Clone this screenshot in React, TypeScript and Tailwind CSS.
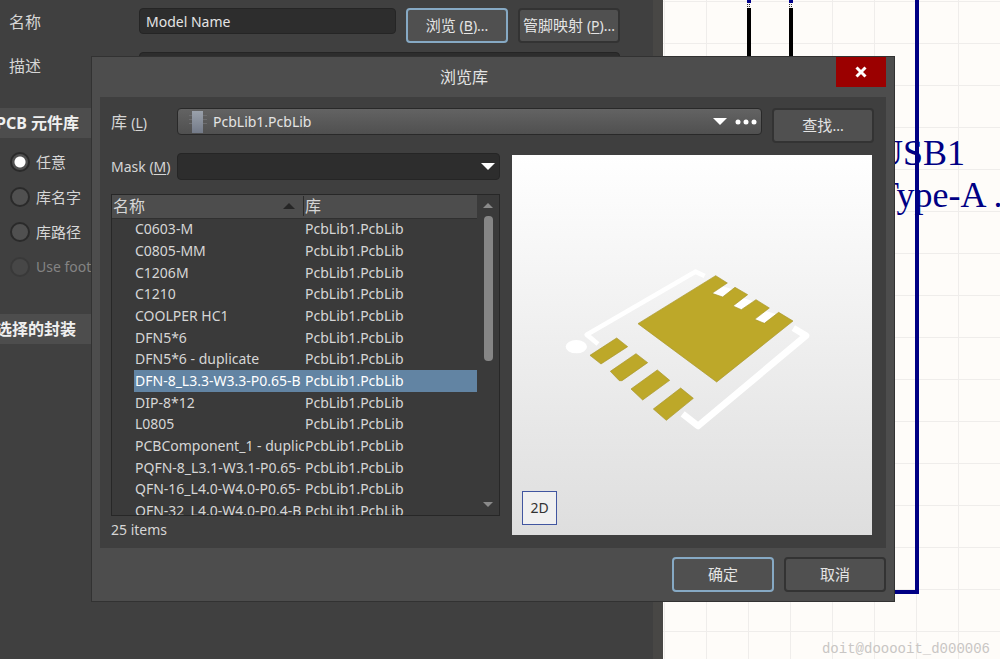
import { useState } from "react";
import type { ReactNode } from "react";
import clsx from "clsx";

const LIB = "PcbLib1.PcbLib";

const footprints = [
  "C0603-M",
  "C0805-MM",
  "C1206M",
  "C1210",
  "COOLPER HC1",
  "DFN5*6",
  "DFN5*6 - duplicate",
  "DFN-8_L3.3-W3.3-P0.65-B",
  "DIP-8*12",
  "L0805",
  "PCBComponent_1 - duplic",
  "PQFN-8_L3.1-W3.1-P0.65-",
  "QFN-16_L4.0-W4.0-P0.65-",
  "QFN-32_L4.0-W4.0-P0.4-B",
];

const scopes = [
  { id: "any", label: "任意", disabled: false },
  { id: "name", label: "库名字", disabled: false },
  { id: "path", label: "库路径", disabled: false },
  { id: "integrated", label: "Use footprint", disabled: true },
];

function Key({ children }: { children: string }) {
  return (
    <span className="text-sm">
      (<span className="underline underline-offset-2">{children}</span>)
    </span>
  );
}

interface PushButtonProps {
  children: ReactNode;
  primary?: boolean;
}

function PushButton({ children, primary = false }: PushButtonProps) {
  return (
    <button
      className={clsx(
        "flex h-[35px] w-[102px] shrink-0 items-center justify-center rounded border-2 bg-[#505050] text-[15px] whitespace-nowrap text-[#e4e4e4]",
        primary ? "border-[#86a9c4]" : "border-[#333]"
      )}
    >
      {children}
    </button>
  );
}

function Arrow({ className, up = false }: { className: string; up?: boolean }) {
  return (
    <svg viewBox="0 0 12 6" className={clsx("shrink-0", className)} aria-hidden="true">
      <path d={up ? "M0 6L6 0L12 6Z" : "M0 0L6 6L12 0Z"} fill="currentColor" />
    </svg>
  );
}

function SectionTitle({ children }: { children: ReactNode }) {
  return (
    <h2 className="flex h-[30px] items-center bg-[#4d4d4d] text-base font-bold text-[#f0f0f0]">
      <span className="-ml-1">{children}</span>
    </h2>
  );
}

function ModelPanel() {
  const [scope, setScope] = useState("any");

  return (
    <section className="w-[663px] shrink-0 overflow-hidden border-r-[10px] border-[#484745] bg-[#404040]">
      <div className="flex items-start pt-2 pl-[9px]">
        <label htmlFor="model-name" className="w-[130px] pt-0.5 text-base">
          名称
        </label>
        <input
          id="model-name"
          defaultValue="Model Name"
          className="h-[26px] w-[257px] rounded border border-[#252525] bg-[#2d2d2d] px-1.5 text-sm text-[#e4e4e4]"
        />
        <div className="ml-2.5 flex gap-2.5">
          <PushButton primary>
            <span>
              浏览 <Key>B</Key>
              <span className="text-sm">...</span>
            </span>
          </PushButton>
          <PushButton>
            <span>
              管脚映射 <Key>P</Key>
              <span className="text-sm">...</span>
            </span>
          </PushButton>
        </div>
      </div>
      <div className="flex items-start pt-[9px] pl-[9px]">
        <label htmlFor="model-desc" className="w-[130px] pt-0.5 text-base">
          描述
        </label>
        <input
          id="model-desc"
          className="h-[26px] w-[481px] rounded border border-[#252525] bg-[#2d2d2d] px-1.5 text-sm"
        />
      </div>

      <div className="mt-[30px]">
        <SectionTitle>PCB 元件库</SectionTitle>
        <fieldset className="flex flex-col gap-[11px] pt-3 pb-[35px] pl-2.5">
          {scopes.map((s) => (
            <label
              key={s.id}
              className={clsx("flex h-6 items-center gap-1.5", s.disabled && "text-[#848484]")}
            >
              <input
                type="radio"
                name="scope"
                checked={scope === s.id}
                disabled={s.disabled}
                onChange={() => setScope(s.id)}
                className="size-5 appearance-none rounded-full border-2 border-[#2a2a2a] bg-[#505050] checked:bg-[radial-gradient(circle,#fff_5px,#505050_6px)] disabled:border-[#393939] disabled:bg-[#474747]"
              />
              <span className={s.disabled ? "text-sm" : "text-[15px]"}>{s.label}</span>
            </label>
          ))}
        </fieldset>
        <SectionTitle>选择的封装</SectionTitle>
      </div>
    </section>
  );
}

// Schematic sheet behind the dialogs
function Sheet() {
  return (
    <div className="relative min-w-0 flex-1 overflow-hidden bg-[#fefcf9]">
      <svg className="absolute inset-0 h-full w-full" aria-hidden="true">
        <defs>
          <pattern id="grid" x="1" y="1" width="42" height="42" patternUnits="userSpaceOnUse">
            <path d="M0.5 0V42M0 0.5H42" stroke="#efedeb" fill="none" />
          </pattern>
        </defs>
        <rect width="100%" height="100%" fill="url(#grid)" />
        <path d="M86 8V120M128 8V120" stroke="#000" strokeWidth="4" />
        <path d="M86 0V3M128 0V3" stroke="#00008b" strokeWidth="4" />
        <path
          d="M84 4.5H88M84 6.5H88M126 4.5H130M126 6.5H130"
          stroke="#333"
          strokeDasharray="1 1"
        />
        <path d="M254 0V592H120" stroke="#000084" strokeWidth="4" fill="none" />
        <g fill="#000084" fontSize="36" fontFamily="'Liberation Serif', serif">
          <text x="214" y="165">USB1</text>
          <text x="214" y="207">Type-A .</text>
        </g>
      </svg>
      <p className="absolute right-2.5 bottom-0 font-['Liberation_Mono',monospace] text-sm text-[#c9c6c4]">
        doit@dooooit_d000006
      </p>
    </div>
  );
}

function FootprintPreview() {
  return (
    <div className="relative mt-0.5 mr-0.5 h-[380px] min-w-0 flex-1 bg-linear-to-b from-white to-[#dedede]">
      <svg viewBox="0 0 360 380" className="h-full w-full" role="img" aria-label="DFN-8">
        <g transform="translate(-2 85) scale(.33333)">
          <g fill="none" stroke="#fff" strokeWidth="20" strokeLinejoin="round">
            <path d="M584 108L556 95L230 284L264 312" strokeWidth="14" />
            <path d="M850 264L888 287L564 558L518 522" />
          </g>
          <ellipse cx="199" cy="320" rx="32" ry="20" fill="#fff" />
          <path
            d="M606 160L634 138L668 148L642 168Q630 174 620 170ZM668 198L700 174L730 184L708 204Q696 212 684 207ZM732 238L764 212L798 222L770 246Q758 254 748 250Z"
            fill="#fff"
          />
          <g fill="#bda829" stroke="#a8962a" strokeWidth="2" strokeLinejoin="round">
            <path d="M617 107L652 129L606 160L638 171L675 142L713 164L669 198L694 209L738 179L778 204L734 238L763 250L806 217L849 243L620 426L384 251Z" />
            <path d="M320 294L353 320L273 372L240 346Z" />
            <path d="M378 341L413 368L336 422L328 422L301 394Z" />
            <path d="M442 390L479 421L398 480L363 447Z" />
            <path d="M512 444L550 475L469 541L430 507Z" />
          </g>
        </g>
      </svg>
      <button className="absolute bottom-2.5 left-2.5 h-[34px] w-[35px] border border-[#4156a0] bg-[#f0f0f0] text-sm text-[#333]">
        2D
      </button>
    </div>
  );
}

function FootprintList() {
  const [selected, setSelected] = useState(7);

  return (
    <div className="flex h-[322px] overflow-hidden border border-[#272727] bg-[#3a3a3a]">
      <div className="min-w-0 flex-1 overflow-hidden">
        <table className="h-[327px] w-full table-fixed border-collapse text-left">
          <colgroup>
            <col className="w-[22px]" />
            <col className="w-[170px]" />
            <col />
          </colgroup>
          <thead>
            <tr className="h-[23px] border-b border-[#303030] bg-[#4d4d4d] text-base leading-5">
              <th colSpan={2} className="p-0 font-normal">
                <div className="flex items-center justify-between border-r border-[#2b2b2b] pr-2 pl-px">
                  名称
                  <Arrow up className="h-[6px] w-3 text-[#262626]" />
                </div>
              </th>
              <th className="p-0 pl-px font-normal">库</th>
            </tr>
          </thead>
          <tbody>
            {footprints.map((name, i) => (
              <tr key={name} onClick={() => setSelected(i)} className="text-sm leading-5">
                <td className="p-0" />
                <td
                  className={clsx(
                    "overflow-hidden p-0 pl-px whitespace-nowrap",
                    i === selected && "bg-[#6284a3] text-white"
                  )}
                >
                  {name}
                </td>
                <td
                  className={clsx(
                    "overflow-hidden p-0 pl-px whitespace-nowrap",
                    i === selected && "bg-[#6284a3] text-white"
                  )}
                >
                  {LIB}
                </td>
              </tr>
            ))}
          </tbody>
        </table>
      </div>
      <div className="flex w-[22px] flex-col items-center py-2 text-[#8a8a8a]" aria-hidden="true">
        <Arrow up className="h-[5px] w-2.5" />
        <div className="mt-2 h-[145px] w-[9px] rounded-sm bg-[#868686]" />
        <Arrow className="mt-auto h-[5px] w-2.5" />
      </div>
    </div>
  );
}

function BrowseDialog() {
  return (
    <div
      role="dialog"
      aria-label="浏览库"
      className="absolute top-[56px] right-[105px] left-[91px] border border-[#323232] bg-[#4d4d4d]"
    >
      <header className="flex h-10 items-start pr-2">
        <h1 className="flex-1 self-center text-center text-base text-[#e4e4e4]">浏览库</h1>
        <button
          aria-label="关闭"
          className="flex h-[30px] w-[50px] items-center justify-center bg-[#9b0000] text-white"
        >
          <svg viewBox="0 0 12 12" className="size-3" aria-hidden="true">
            <path d="M1.5 1.5L10.5 10.5M10.5 1.5L1.5 10.5" stroke="currentColor" strokeWidth="3" />
          </svg>
        </button>
      </header>

      <div className="mx-2 bg-[#3f3f3f] pt-[11px] pr-3 pb-2 pl-[11px]">
        <div className="flex items-start">
          <label htmlFor="library" className="w-[66px] shrink-0 pt-0.5 text-base">
            库 <Key>L</Key>
          </label>
          <div className="flex h-[27px] flex-1 items-center rounded border border-[#292929] bg-linear-to-b from-[#636363] to-[#505050] pr-1">
            <svg viewBox="0 0 20 22" className="ml-2.5 h-[22px] w-5 shrink-0" aria-hidden="true">
              <defs>
                <linearGradient id="chip" x2="0" y2="1">
                  <stop offset="0" stopColor="#9aa1ab" />
                  <stop offset="1" stopColor="#737a88" />
                </linearGradient>
              </defs>
              <path d="M1 4.5H19M1 8.5H19M1 12.5H19" stroke="#6d6d6f" />
              <rect x="4" y="0" width="11" height="22" fill="url(#chip)" />
            </svg>
            <select
              id="library"
              className="ml-[5px] min-w-0 flex-1 appearance-none bg-transparent text-sm text-[#e4e4e4]"
            >
              <option>{LIB}</option>
            </select>
            <Arrow className="h-[7px] w-3.5 text-white" />
            <button aria-label="更多" className="ml-2 flex h-full items-center text-white">
              <svg viewBox="0 0 22 6" className="h-1.5 w-[22px]" aria-hidden="true">
                <g fill="currentColor">
                  <circle cx="3" cy="3" r="2.5" />
                  <circle cx="11" cy="3" r="2.5" />
                  <circle cx="19" cy="3" r="2.5" />
                </g>
              </svg>
            </button>
          </div>
          <div className="ml-2.5">
            <PushButton>
              查找<span className="text-sm">...</span>
            </PushButton>
          </div>
        </div>

        <div className="mt-2.5 flex items-start gap-3">
          <div className="w-[389px] shrink-0">
            <div className="flex items-start">
              <label htmlFor="mask" className="w-[66px] shrink-0 pt-1 text-sm whitespace-nowrap">
                Mask <Key>M</Key>
              </label>
              <div className="flex h-[27px] flex-1 items-center rounded border border-[#252525] bg-[#2d2d2d] pr-1">
                <select id="mask" className="min-w-0 flex-1 appearance-none bg-transparent text-sm">
                  <option></option>
                </select>
                <Arrow className="h-[7px] w-3.5 text-white" />
              </div>
            </div>
            <div className="mt-3.5">
              <FootprintList />
            </div>
            <p className="mt-1 text-sm">25 items</p>
          </div>
          <FootprintPreview />
        </div>
      </div>

      <footer className="flex justify-end gap-2.5 px-2 py-[9px]">
        <PushButton primary>确定</PushButton>
        <PushButton>取消</PushButton>
      </footer>
    </div>
  );
}

export default function App() {
  return (
    <main className="relative flex min-h-screen overflow-hidden bg-[#404040] font-['Noto_Sans','Noto_Sans_CJK_SC',sans-serif] text-[#d6d6d6]">
      <ModelPanel />
      <Sheet />
      <BrowseDialog />
    </main>
  );
}
